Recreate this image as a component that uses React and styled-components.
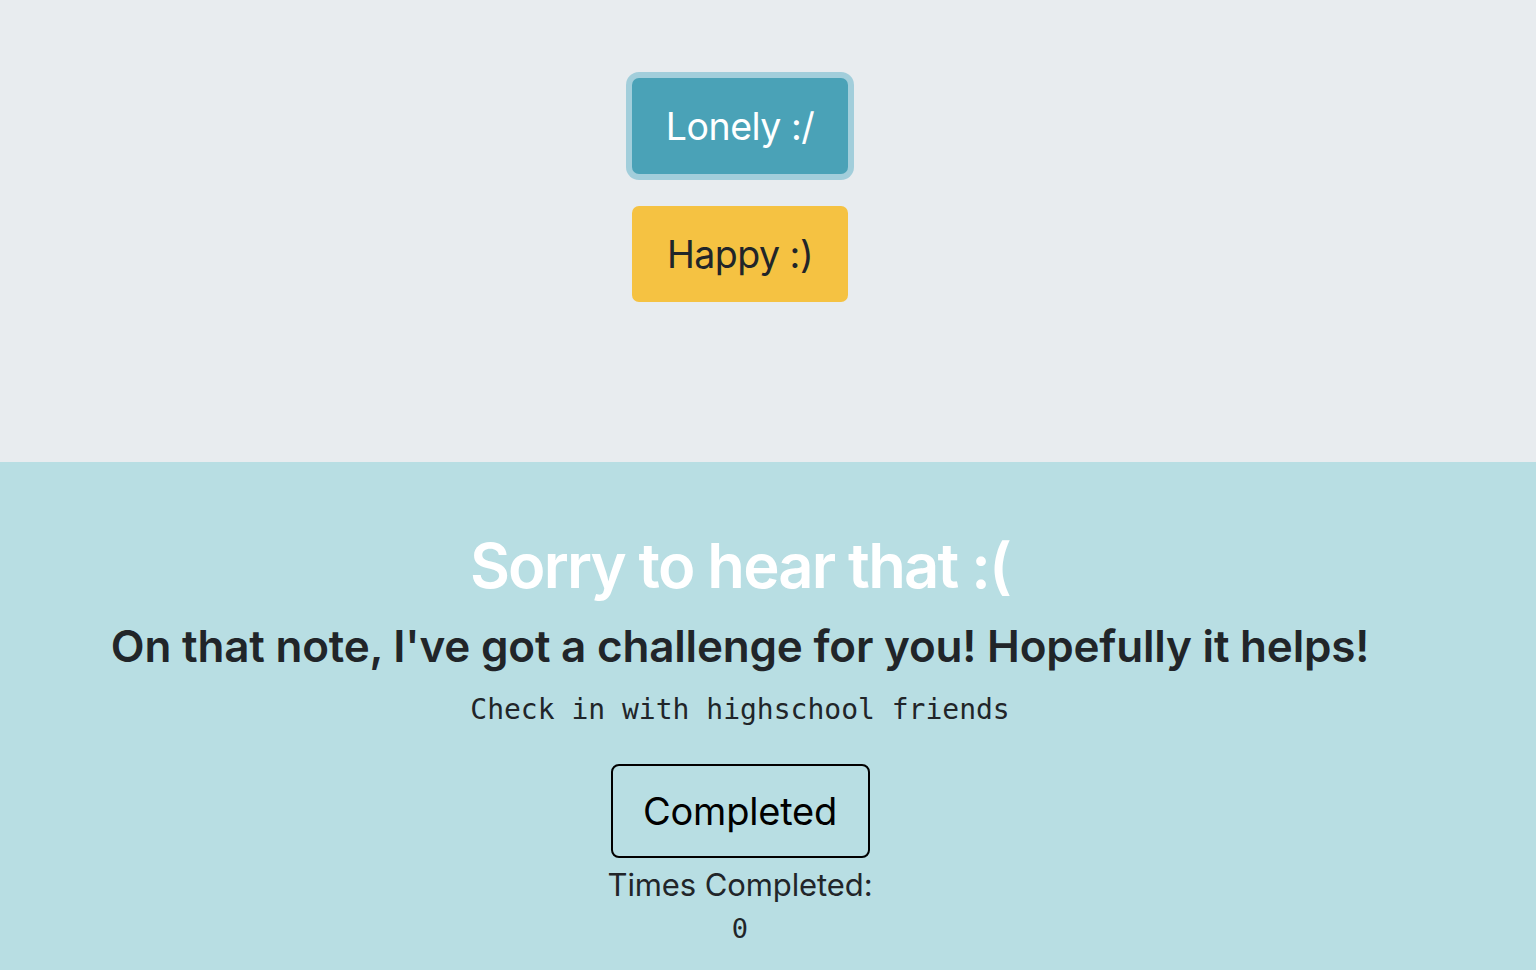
import React, { useState } from 'react';
import styled, { createGlobalStyle } from 'styled-components';

const Global = createGlobalStyle`
  html, body {
    margin: 0;
    padding: 0;
    background: #b8dee3;
  }
  body {
    font-family: Inter, 'Liberation Sans', sans-serif;
    color: #212529;
  }
`;

const Page = styled.div`
  min-height: 970px;
  display: flex;
  flex-direction: column;
`;

const MoodPicker = styled.section`
  background: #e8ecef;
  height: 462px;
  box-sizing: border-box;
  padding: 78px 56px 0 0;
  display: flex;
  flex-direction: column;
  align-items: center;
  gap: 32px;
`;

const MoodButton = styled.button`
  width: 216px;
  height: 96px;
  border: none;
  border-radius: 7px;
  font-family: Inter, 'Liberation Sans', sans-serif;
  font-size: 37.5px;
  letter-spacing: -0.5px;
  cursor: pointer;
  background: ${(p) => p.$bg};
  color: ${(p) => p.$fg};
  box-shadow: ${(p) => (p.$active ? '0 0 0 6px #a2cedb' : 'none')};
`;

const Challenge = styled.section`
  flex: 1;
  background: #b8dee3;
  padding: 66px 56px 20px 0;
  display: flex;
  flex-direction: column;
  align-items: center;
  text-align: center;
`;

const Title = styled.h1`
  margin: 0;
  color: #fff;
  font-size: 61.5px;
  font-weight: 600;
  letter-spacing: -1.8px;
  line-height: 76px;
`;

const Subtitle = styled.h2`
  margin: 14px 0 0;
  font-size: 44px;
  font-weight: 600;
  letter-spacing: -0.2px;
  line-height: 56px;
`;

const Task = styled.code`
  display: block;
  margin-top: 19px;
  font-family: 'DejaVu Sans Mono', 'Liberation Mono', monospace;
  font-size: 28px;
  line-height: 34px;
  color: #212529;
`;

const DoneButton = styled.button`
  margin-top: 37px;
  width: 259px;
  height: 94px;
  background: transparent;
  border: 2px solid #000;
  border-radius: 8px;
  font-family: Inter, 'Liberation Sans', sans-serif;
  font-size: 38px;
  letter-spacing: -0.2px;
  color: #000;
  cursor: pointer;
`;

const CountLabel = styled.div`
  margin-top: 7px;
  font-size: 31px;
  letter-spacing: -0.1px;
  line-height: 40px;
`;

const Count = styled.code`
  font-family: 'DejaVu Sans Mono', 'Liberation Mono', monospace;
  font-size: 27px;
  line-height: 44px;
  margin-top: 2px;
`;

export default function App() {
  const [count, setCount] = useState(0);
  return (
    <Page>
      <Global />
      <MoodPicker>
        <MoodButton $bg="#4aa2b7" $fg="#fff" $active>
          Lonely :/
        </MoodButton>
        <MoodButton $bg="#f5c242" $fg="#212529">
          Happy :)
        </MoodButton>
      </MoodPicker>
      <Challenge>
        <Title>Sorry to hear that :(</Title>
        <Subtitle>On that note, I've got a challenge for you! Hopefully it helps!</Subtitle>
        <Task>Check in with highschool friends</Task>
        <DoneButton onClick={() => setCount(count + 1)}>Completed</DoneButton>
        <CountLabel>Times Completed:</CountLabel>
        <Count>{count}</Count>
      </Challenge>
    </Page>
  );
}
